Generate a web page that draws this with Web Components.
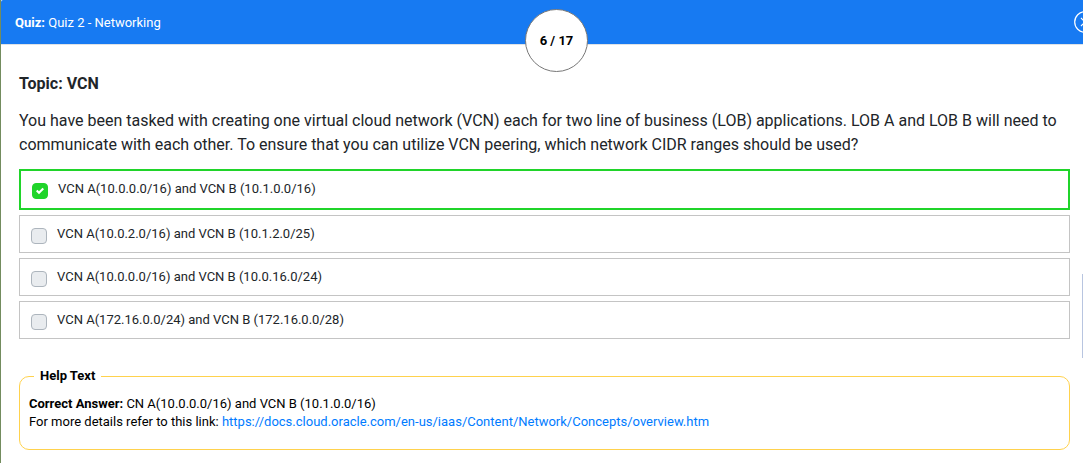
<!DOCTYPE html>
<html lang="en">
<head>
<meta charset="utf-8">
<title>Quiz 2 - Networking</title>
<style>
html { height: 100%; }
body { margin: 0; min-height: 100%; box-sizing: border-box; background: #fff; font-family: Roboto, "Liberation Sans", sans-serif; color: #212529; }
</style>
</head>
<body>
<quiz-page>
  <quiz-header slot="header" current="6" total="17">Quiz 2 - Networking</quiz-header>
  <quiz-question topic="VCN">You have been tasked with creating one virtual cloud network (VCN) each for two line of business (LOB) applications. LOB A and LOB B will need to communicate with each other. To ensure that you can utilize VCN peering, which network CIDR ranges should be used?</quiz-question>
  <quiz-options>
    <quiz-option correct>VCN A(10.0.0.0/16) and VCN B (10.1.0.0/16)</quiz-option>
    <quiz-option>VCN A(10.0.2.0/16) and VCN B (10.1.2.0/25)</quiz-option>
    <quiz-option>VCN A(10.0.0.0/16) and VCN B (10.0.16.0/24)</quiz-option>
    <quiz-option>VCN A(172.16.0.0/24) and VCN B (172.16.0.0/28)</quiz-option>
  </quiz-options>
  <quiz-help href="https://docs.cloud.oracle.com/en-us/iaas/Content/Network/Concepts/overview.htm">CN A(10.0.0.0/16) and VCN B (10.1.0.0/16)</quiz-help>
</quiz-page>
<script>
const define = (name, html, setup) => customElements.define(name, class extends HTMLElement {
  connectedCallback() {
    if (this.shadowRoot) return;
    const root = this.attachShadow({ mode: "open" });
    root.innerHTML = html;
    if (setup) setup(this, root);
  }
});

define("quiz-page", `
<style>
  :host { display: block; position: relative; min-height: 100vh; box-sizing: border-box; border-left: 1px solid #738c5e; overflow: hidden; }
  main { padding: 27px 13px 12px 18px; }
  .handle { position: absolute; right: 0; top: 274px; width: 1px; height: 84px; background: #b8c5e0; }
</style>
<slot name="header"></slot>
<main><slot></slot></main>
<div class="handle"></div>`);

define("quiz-header", `
<style>
  :host { display: block; position: relative; color: #fff; font-size: 13px; line-height: 20px; }
  header { display: flex; align-items: center; justify-content: space-between; height: 44px; padding-left: 14px; background: #177af2; border-bottom: 1px solid #dee2e6; border-top-left-radius: 2px; }
  h1 { margin: 0; padding-top: 2px; font-size: 13px; font-weight: 400; }
  b { font-weight: 700; }
  button { display: block; width: 24px; height: 24px; margin-right: -14px; padding: 0; border: 0; background: none; color: inherit; }
  svg { display: block; }
  .count { position: absolute; top: 9px; left: 50%; width: 63px; height: 63px; margin-left: -17px; box-sizing: border-box; border: 1px solid #777; border-radius: 50%; background: #fff; color: #000; font-weight: 700; display: flex; align-items: center; justify-content: center; }
</style>
<header>
  <h1><b>Quiz:</b> <slot></slot></h1>
  <button type="button" aria-label="Close"><svg width="24" height="24" viewBox="0 0 24 24" fill="none" stroke="currentColor" stroke-width="1.2"><circle cx="12" cy="12" r="10.3"/><path d="M8 8l8 8M16 8l-8 8"/></svg></button>
</header>
<div class="count"></div>`, (el, root) => {
  root.querySelector(".count").textContent = el.getAttribute("current") + " / " + el.getAttribute("total");
});

define("quiz-question", `
<style>
  :host { display: block; font-size: 16px; line-height: 24px; }
  h2 { margin: 0 0 13px; font-size: 16px; line-height: 24px; font-weight: 700; }
  p { margin: 0; }
</style>
<h2></h2>
<p><slot></slot></p>`, (el, root) => {
  root.querySelector("h2").textContent = "Topic: " + el.getAttribute("topic");
});

define("quiz-options", `
<style>
  :host { display: flex; flex-direction: column; gap: 5px; margin-top: 12px; }
</style>
<slot></slot>`);

define("quiz-option", `
<style>
  :host { display: block; border: 1px solid #c4c4c4; font-size: 13px; line-height: 20px; }
  :host([correct]) { border: 2px solid #20d42a; }
  label { display: flex; align-items: flex-start; gap: 10px; padding: 8px 11px; }
  :host([correct]) label { padding-bottom: 9px; }
  input { appearance: none; box-sizing: border-box; flex: none; width: 16px; height: 16px; margin: 4px 0 0; border: 1px solid #adb5bd; border-radius: 4px; background: #e9ecef; }
  input:checked { border-color: #20d42a; background: #20d42a; }
  .box { position: relative; display: flex; }
  svg { position: absolute; left: 4px; top: 8px; width: 8px; height: 8px; fill: #fff; display: none; }
  :host([correct]) svg { display: block; }
</style>
<label>
  <span class="box"><input type="checkbox"><svg viewBox="0 0 8 8"><path d="M6.564.75l-3.59 3.612-1.538-1.55L0 4.26l2.974 2.99L8 2.193z"/></svg></span>
  <span><slot></slot></span>
</label>`, (el, root) => {
  root.querySelector("input").checked = el.hasAttribute("correct");
});

define("quiz-help", `
<style>
  :host { display: block; margin-top: 28px; color: #000; font-size: 13px; line-height: 18px; }
  fieldset { margin: 0; min-width: 0; padding: 10px 9px 18px; border: 1px solid #ffd24d; border-radius: 10px; }
  legend { margin-left: 5px; padding: 0 6px; font-weight: 700; }
  p { margin: 0; overflow-wrap: anywhere; }
  b { font-weight: 700; }
  a { color: #007bff; text-decoration: none; }
</style>
<fieldset>
  <legend>Help Text</legend>
  <p><b>Correct Answer:</b> <slot></slot></p>
  <p>For more details refer to this link: <a></a></p>
</fieldset>`, (el, root) => {
  const a = root.querySelector("a");
  a.href = a.textContent = el.getAttribute("href");
});
</script>
</body>
</html>
